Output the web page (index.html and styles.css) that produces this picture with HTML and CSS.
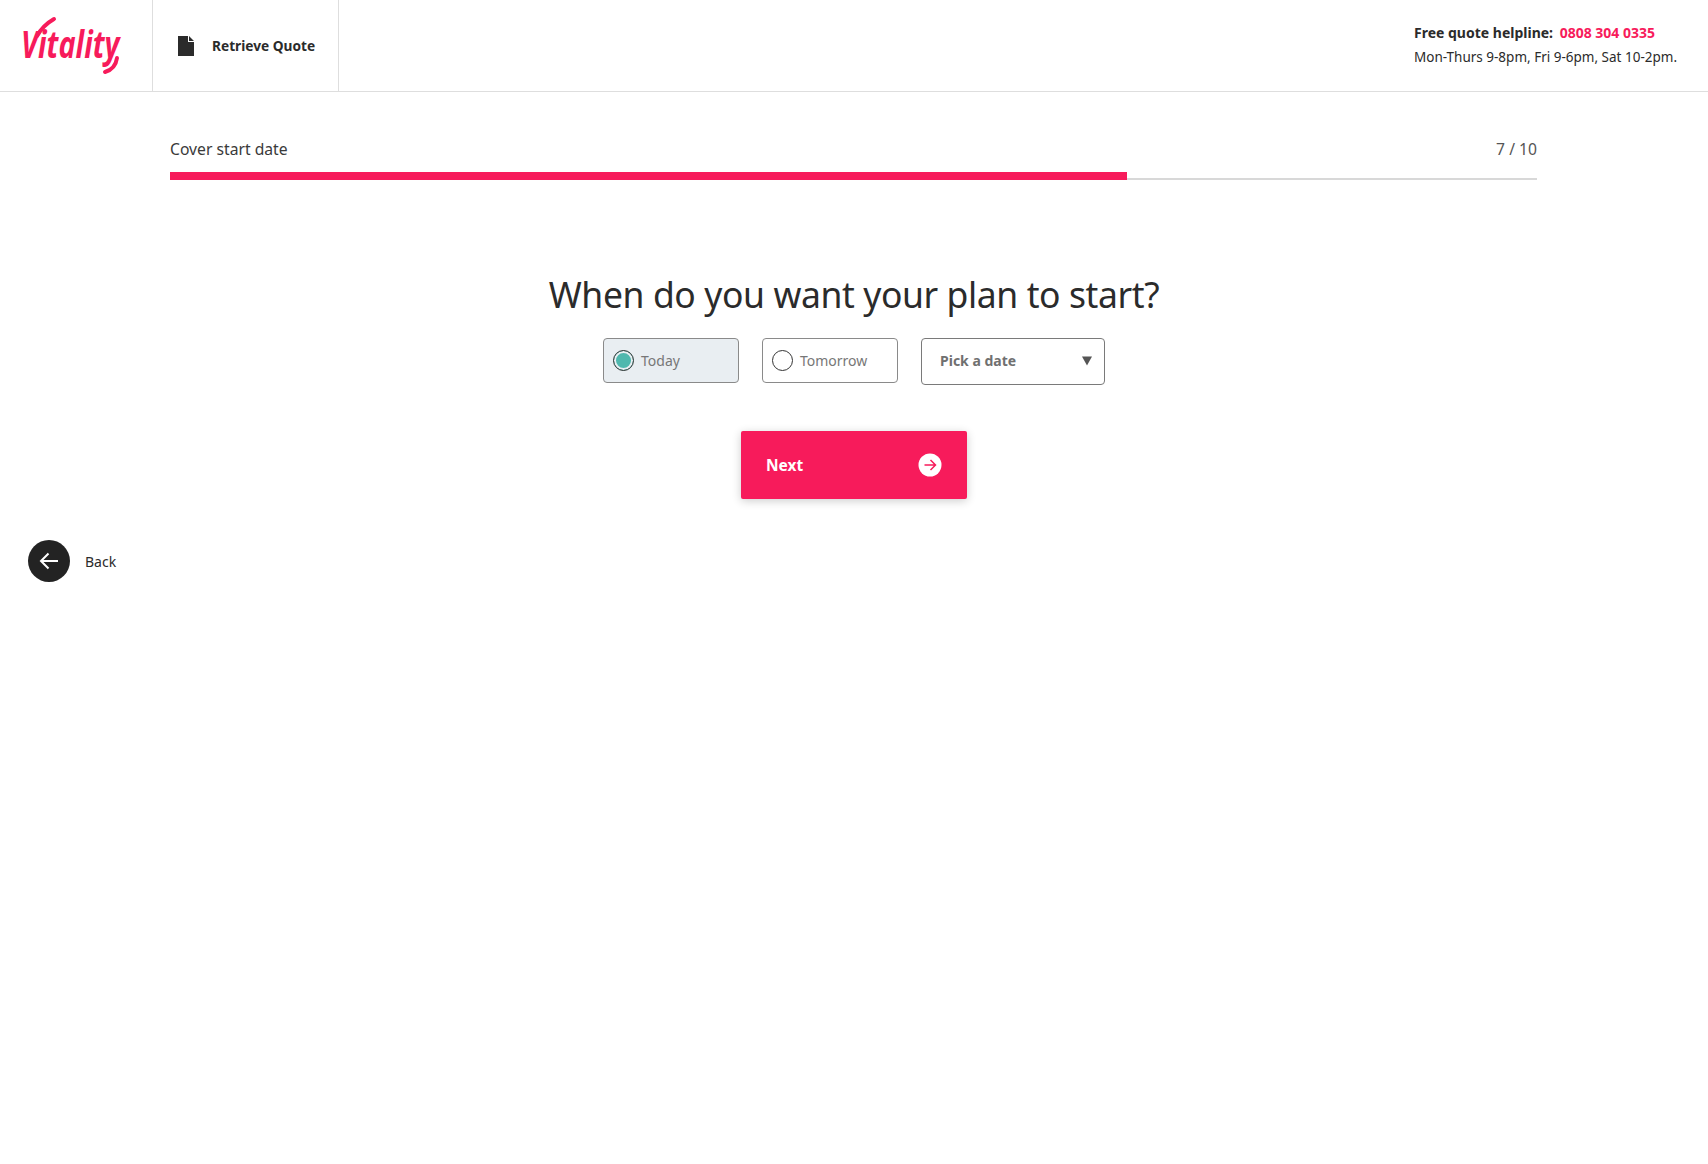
FILE: index.html
```html
<!DOCTYPE html>
<html lang="en">
<head>
    <meta charset="UTF-8">
    <meta name="viewport" content="width=device-width, initial-scale=1.0">
    <title>Cover start date - Vitality</title>
    <link rel="stylesheet" href="styles.css">
</head>
<body>
    <header class="site-header">
        <a href="#" class="logo-cell">
            <svg class="logo" width="110" height="64" viewBox="0 0 110 64">
                <path class="logo-mark" d="M17 22C22 13 27 9 34 5"/>
                <path class="logo-mark" d="M97 44C96 51 92 56 85 58"/>
                <text class="logo-text" transform="translate(1 44) scale(.76 1)">Vitality</text>
            </svg>
        </a>
        <a href="#" class="retrieve">
            <svg width="16" height="20" viewBox="0 0 16 20"><path fill="#2b2b2b" d="M0 0h10v6h6v14H0zM11 0l5 5h-5z"/></svg>
            <span>Retrieve Quote</span>
        </a>
        <div class="helpline">
            <p><strong>Free quote helpline:</strong> <a href="#" class="phone">0808 304 0335</a></p>
            <p class="hours">Mon-Thurs 9-8pm, Fri 9-6pm, Sat 10-2pm.</p>
        </div>
    </header>

    <section class="progress">
        <div class="progress-labels">
            <span>Cover start date</span>
            <span class="count">7 / 10</span>
        </div>
        <div class="progress-track"><div class="progress-fill" style="width: 70%"></div></div>
    </section>

    <main class="question">
        <h1>When do you want your plan to start?</h1>
        <div class="options">
            <label class="option selected"><span class="radio"></span><span>Today</span></label>
            <label class="option"><span class="radio"></span><span>Tomorrow</span></label>
            <div class="date-select">
                <span>Pick a date</span>
                <svg width="10" height="10" viewBox="0 0 12 11"><path fill="#555" d="M0 0h12L6 11z"/></svg>
            </div>
        </div>
        <button class="next">
            <span>Next</span>
            <svg width="24" height="24" viewBox="0 0 24 24">
                <circle cx="12" cy="12" r="11.5" fill="#fff"/>
                <path d="M6.5 12h10.5M12.5 7l5 5-5 5" fill="none" stroke="#f71b5b" stroke-width="1.5"/>
            </svg>
        </button>
    </main>

    <a href="#" class="back">
        <span class="back-circle">
            <svg width="20" height="18" viewBox="0 0 20 18"><path d="M19 9H2M9.500 1.500 2 9l7.500 7.500" fill="none" stroke="#fff" stroke-width="2"/></svg>
        </span>
        Back
    </a>
</body>
</html>
```

FILE: styles.css
```css
* {
    box-sizing: border-box;
}
body {
    margin: 0;
    min-height: 1164px;
    background: #fff;
    color: #2b2b2b;
    font-family: "Noto Sans", "Open Sans", sans-serif;
    font-size: 15px;
}
a {
    color: inherit;
    text-decoration: none;
}
p {
    margin: 0;
}
.site-header {
    display: flex;
    height: 92px;
    border-bottom: 1px solid #dedede;
}
.logo-cell {
    display: flex;
    align-items: center;
    width: 153px;
    padding-left: 20px;
    border-right: 1px solid #dedede;
}
.logo {
    overflow: visible;
}
.logo-mark {
    fill: none;
    stroke: #f71b5b;
    stroke-width: 4;
    stroke-linecap: round;
}
.logo-text {
    fill: #f71b5b;
    font-family: "Open Sans", sans-serif;
    font-style: italic;
    font-weight: 700;
    font-size: 38px;
}
.retrieve {
    display: flex;
    align-items: center;
    gap: 18px;
    width: 186px;
    padding-left: 25px;
    border-right: 1px solid #dedede;
    font-weight: 700;
    font-size: 13.7px;
}
.helpline {
    margin-left: auto;
    padding: 21px 30px 0 0;
    width: 294px;
    font-size: 14px;
    line-height: 24px;
    white-space: nowrap;
}
.hours {
    font-size: 13.5px;
}
.phone {
    margin-left: 3px;
    color: #f71b5b;
    font-weight: 700;
}
.progress {
    margin: 0 171px 0 170px;
    padding-top: 44px;
}
.progress-labels {
    display: flex;
    justify-content: space-between;
    font-size: 15.7px;
    line-height: 26px;
    color: #3a3a3a;
}
.count {
    color: #555;
}
.progress-track {
    display: flex;
    align-items: flex-end;
    height: 8px;
    margin-top: 10px;
    border-bottom: 2px solid #d8d8d8;
}
.progress-fill {
    height: 8px;
    margin-bottom: -2px;
    background: #f71b5b;
}
.question {
    display: flex;
    flex-direction: column;
    align-items: center;
    padding-top: 89px;
}
h1 {
    margin: 0;
    font-size: 35.5px;
    font-weight: 400;
    letter-spacing: -0.4px;
    line-height: 50px;
}
.options {
    display: flex;
    align-items: flex-start;
    gap: 23px;
    margin-top: 19px;
}
.option {
    display: flex;
    align-items: center;
    gap: 7px;
    width: 136px;
    height: 45px;
    padding-left: 9px;
    border: 1px solid #8a8a8a;
    border-radius: 4px;
    color: #777;
    font-size: 14px;
}
.option.selected {
    background: #e9eef2;
}
.radio {
    width: 21px;
    height: 21px;
    border: 1px solid #333;
    border-radius: 50%;
    background: #fff;
}
.selected .radio {
    background: #4fb8ae;
    box-shadow: inset 0 0 0 2px #e9eef2;
}
.date-select {
    display: flex;
    align-items: center;
    justify-content: space-between;
    width: 184px;
    height: 47px;
    padding: 0 12px 2px 18px;
    border: 1px solid #7a7a7a;
    border-radius: 4px;
    color: #707070;
    font-weight: 700;
    font-size: 14px;
}
.next {
    display: flex;
    align-items: center;
    justify-content: space-between;
    width: 226px;
    height: 68px;
    margin-top: 46px;
    padding: 0 25px;
    border: none;
    border-radius: 2px;
    background: #f71b5b;
    box-shadow: 0 2px 10px rgba(0, 0, 0, 0.2);
    color: #fff;
    font-family: inherit;
    font-size: 15.5px;
    font-weight: 700;
}
.back {
    display: inline-flex;
    align-items: center;
    gap: 15px;
    margin: 41px 0 0 28px;
    font-size: 14px;
}
.back-circle {
    display: flex;
    align-items: center;
    justify-content: center;
    width: 42px;
    height: 42px;
    border-radius: 50%;
    background: #232323;
}
```
